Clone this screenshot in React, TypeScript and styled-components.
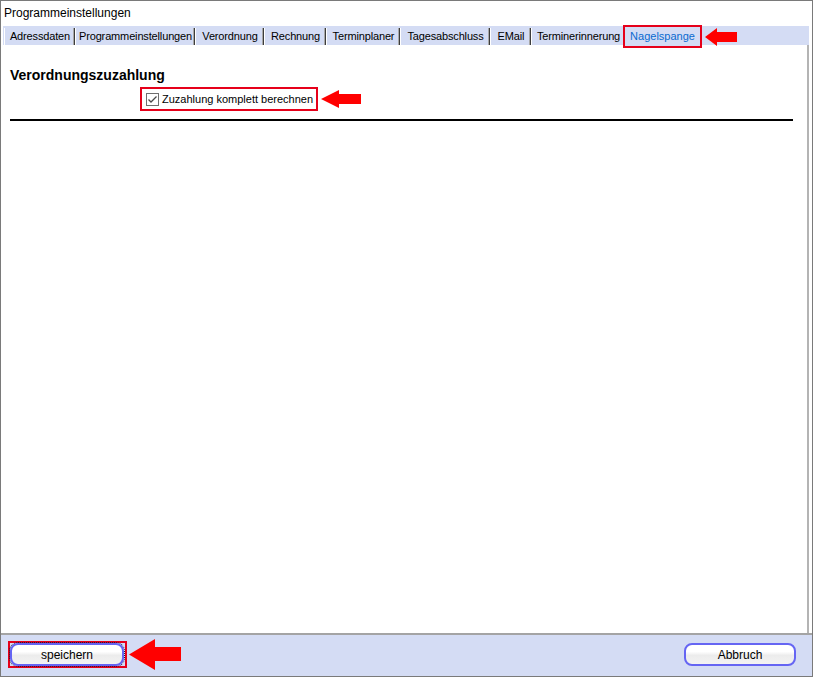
import { FC } from "react";
import styled, { createGlobalStyle } from "styled-components";

const GlobalStyle = createGlobalStyle`
  html, body {
    margin: 0;
    padding: 0;
    background: #fff;
  }
  * {
    box-sizing: border-box;
  }
`;

// tab labels and their widths in the strip
const tabs: [string, number][] = [
  ["Adressdaten", 71],
  ["Programmeinstellungen", 120],
  ["Verordnung", 69],
  ["Rechnung", 62],
  ["Terminplaner", 74],
  ["Tagesabschluss", 90],
  ["EMail", 41],
  ["Terminerinnerung", 94],
];

interface IArrowProps {
  w: number;
  h: number;
  head: number;
  top: number;
  bottom: number;
}

const Arrow: FC<IArrowProps> = ({ w, h, head, top, bottom }) => (
  <svg width={w} height={h} viewBox={`0 0 ${w} ${h}`}>
    <polygon
      fill="#ff0000"
      points={`0,${h / 2} ${head},0 ${head},${top} ${w},${top} ${w},${bottom} ${head},${bottom} ${head},${h}`}
    />
  </svg>
);

const CheckIcon: FC = () => (
  <svg width={13} height={13} viewBox="0 0 13 13">
    <rect x={0.5} y={0.5} width={12} height={12} fill="#fff" stroke="#6f6f6f" />
    <path d="M2.5 6.5 L5 9 L10.5 3.5" fill="none" stroke="#4a4a4a" strokeWidth={1.3} />
  </svg>
);

export default function App() {
  return (
    <>
      <GlobalStyle />
      <Window>
        <TitleBar>Programmeinstellungen</TitleBar>
        <TabStrip>
          {tabs.map(([t, w]) => (
            <Tab key={t} $w={w}>
              {t}
            </Tab>
          ))}
          <Marked $lift>
            <ActiveTab>Nagelspange</ActiveTab>
          </Marked>
          <TabArrow>
            <Arrow w={32} h={18} head={12} top={4} bottom={14} />
          </TabArrow>
        </TabStrip>
        <Content>
          <Heading>Verordnungszuzahlung</Heading>
          <CheckRow>
            <Marked>
              <CheckLabel>
                <CheckIcon />
                Zuzahlung komplett berechnen
              </CheckLabel>
            </Marked>
            <Arrow w={40} h={18} head={18} top={4} bottom={14} />
          </CheckRow>
          <Rule />
        </Content>
        <Footer>
          <FooterGroup>
            <Marked $pad>
              <Button $focused>speichern</Button>
            </Marked>
            <Arrow w={52} h={31} head={26} top={8} bottom={22} />
          </FooterGroup>
          <Button $wide={112}>Abbruch</Button>
        </Footer>
      </Window>
    </>
  );
}

const Window = styled.div`
  width: 813px;
  height: 677px;
  border: 1px solid #7a7a7a;
  display: flex;
  flex-direction: column;
  background: #fff;
  font-family: "Liberation Sans", Arial, sans-serif;
  color: #000;
`;

const TitleBar = styled.div`
  height: 25px;
  line-height: 24px;
  padding-left: 3px;
  font-size: 12px;
`;

const TabStrip = styled.div`
  height: 19px;
  margin: 0 3px 0 2px;
  padding-left: 1px;
  background: #d4dcf4;
  display: flex;
  align-items: flex-end;
  position: relative;
  z-index: 1;
`;

const Tab = styled.div<{ $w: number }>`
  width: ${(p) => p.$w}px;
  flex: none;
  height: 17px;
  line-height: 17px;
  padding-left: 1px;
  text-align: center;
  font-size: 11px;
  letter-spacing: -0.15px;
  border-left: 1px solid #ffffff;
  border-right: 1px solid #3c3c3c;
  box-shadow: inset -1px 0 0 #a8a8a8;
  white-space: nowrap;
  overflow: hidden;
`;

const Marked = styled.div<{ $lift?: boolean; $pad?: boolean }>`
  display: inline-flex;
  align-items: center;
  border: 2px solid #e6001a;
  padding: ${(p) => (p.$pad ? "0 1px 0 0" : "0")};
  margin-bottom: ${(p) => (p.$lift ? "-3px" : "0")};
  margin-left: ${(p) => (p.$lift ? "-2px" : "0")};
  position: relative;
  z-index: 1;
`;

const ActiveTab = styled.div`
  height: 19px;
  width: 75px;
  line-height: 19px;
  text-align: center;
  font-size: 11px;
  color: #0a6ad0;
  background: #d4dcf4;
`;

const TabArrow = styled.div`
  display: flex;
  align-self: center;
  margin-left: 3px;
  margin-top: 2px;
`;

const Content = styled.div`
  flex: 1;
  margin-right: 3px;
  border-right: 2px solid #b4b4b4;
  padding: 22px 14px 0 9px;
  background: #fff;
`;

const Heading = styled.h2`
  margin: 0;
  font-size: 14px;
  line-height: 16px;
  font-weight: bold;
  letter-spacing: 0;
`;

const CheckRow = styled.div`
  display: flex;
  align-items: center;
  gap: 3px;
  margin: 4px 0 0 130px;
`;

const CheckLabel = styled.label`
  display: flex;
  align-items: center;
  gap: 3px;
  height: 20px;
  padding: 0 3px 0 4px;
  font-size: 11px;
  white-space: nowrap;
`;

const Rule = styled.div`
  height: 2px;
  margin-top: 8px;
  background: #000;
`;

const Footer = styled.div`
  height: 43px;
  border-top: 2px solid #a4a4a4;
  background: #d4dcf4;
  display: flex;
  align-items: center;
  justify-content: space-between;
  padding: 0 16px 2px 7px;
`;

const FooterGroup = styled.div`
  display: flex;
  align-items: center;
  gap: 2px;
`;

const Button = styled.button<{ $focused?: boolean; $wide?: number }>`
  width: ${(p) => p.$wide ?? 114}px;
  height: 23px;
  padding: 0;
  border: 2px solid #6565f3;
  border-radius: 8px;
  font-family: "Liberation Sans", Arial, sans-serif;
  font-size: 12px;
  color: #000;
  background: linear-gradient(
    180deg,
    #ffffff 0%,
    #ffffff 35%,
    #ececec 55%,
    #f3f3f3 100%
  );
  outline: ${(p) => (p.$focused ? "1px dotted #1a1a40" : "none")};
  outline-offset: 0;
  cursor: pointer;
`;
